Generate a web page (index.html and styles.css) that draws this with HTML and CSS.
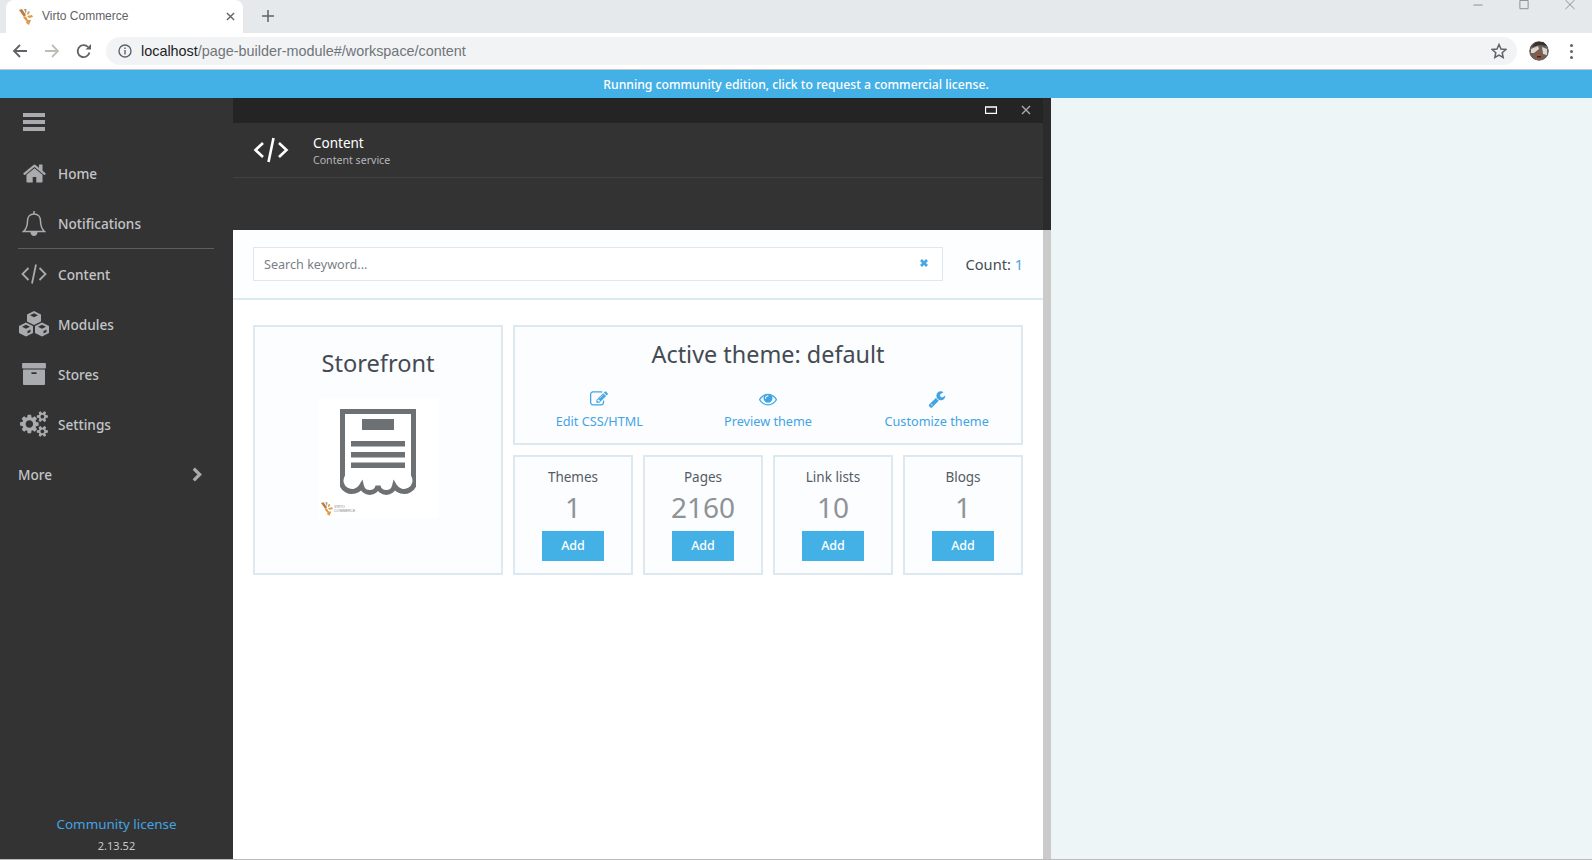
FILE: index.html
```html
<!DOCTYPE html>
<html lang="en">
<head>
<meta charset="utf-8">
<title>Virto Commerce</title>
<link rel="stylesheet" href="styles.css">
</head>
<body>
<div class="tabstrip">
  <div class="tab">
    <svg class="favicon" viewBox="0 0 14 16"><path fill="#c07a3a" d="M0 1l3-1 4 6-2 2z"/><path fill="#9a9a9a" d="M5 0h2.500L7 5z"/><path fill="#e09a4c" d="M9 2l2 1-2 3-1-1zM8 7l5-1 1 2-4 1zM4 8l3-.5L9 11l-2 1zM8 11l4 0-2 5-3-2z"/></svg>
    <span class="tab-title">Virto Commerce</span>
    <svg class="tab-close" viewBox="0 0 10 10"><path d="M1 1l8 8M9 1L1 9"/></svg>
  </div>
  <svg class="new-tab" viewBox="0 0 14 14"><path d="M7 1v12M1 7h12"/></svg>
  <div class="win-controls">
    <svg viewBox="0 0 12 12"><path d="M1 5.500h10"/></svg>
    <svg viewBox="0 0 12 12"><path d="M1.500 .5h9v9h-9z"/></svg>
    <svg viewBox="0 0 12 12"><path d="M1 0l10 10M11 0L1 10"/></svg>
  </div>
</div>
<div class="toolbar">
  <svg class="nav-icon" viewBox="0 0 16 16"><path d="M15 8H2M8 2L2 8l6 6"/></svg>
  <svg class="nav-icon nav-off" viewBox="0 0 16 16"><path d="M1 8h13M8 2l6 6-6 6"/></svg>
  <svg class="nav-icon" viewBox="0 0 16 16"><path d="M13.500 9.500A6 6 0 1 1 12 4"/><path class="fill" d="M9.500 6.500H15V1z"/></svg>
  <div class="omnibox">
    <svg class="info" viewBox="0 0 14 14"><circle cx="7" cy="7" r="6"/><path d="M7 6v4.500M7 3.500v1.500"/></svg>
    <span class="url"><b>localhost</b>/page-builder-module#/workspace/content</span>
    <svg class="star" viewBox="0 0 16 16"><path d="M8 1.500l2 4.500 4.800.5-3.600 3.200 1 4.800L8 12.100l-4.200 2.400 1-4.800L1.200 6.500 6 6z"/></svg>
  </div>
  <svg class="avatar" viewBox="0 0 20 20"><circle cx="10" cy="10" r="10" fill="#6a625c"/><path fill="#3a3230" d="M2 6l5-5 8 0 3 4-7-1z"/><path fill="#dcd8d0" d="M2 8l7-3 1 3-5 4-3 0zM13 6l5 2 0 6-4-1z"/><path fill="#8a5a44" d="M6 12l7-2 1 4-3 5-5-1z"/><path fill="#3a2a26" d="M8 15h4v1.500H8z"/></svg>
  <div class="kebab"><i></i><i></i><i></i></div>
</div>
<a class="banner">Running community edition, click to request a commercial license.</a>
<div class="app">
  <nav class="sidebar">
    <div class="burger"><i></i><i></i><i></i></div>
    <a class="nav-item"><span class="nav-ico"><svg class="ico-home" viewBox="0 0 1792 1792"><path d="M1472 992v480q0 26-19 45t-45 19h-384v-384h-256v384h-384q-26 0-45-19t-19-45v-480q0-1 .5-3t.5-3l575-474 575 474q1 2 1 6zm223-69l-62 74q-8 9-21 11h-3q-13 0-21-7l-692-577-692 577q-12 8-24 7-13-2-21-11l-62-74q-8-10-7-23.500t11-21.500l719-599q32-26 76-26t76 26l244 204v-195q0-14 9-23t23-9h192q14 0 23 9t9 23v408l219 182q10 8 11 21.500t-7 23.500z"/></svg></span>Home</a>
    <a class="nav-item"><span class="nav-ico"><svg class="ico-bell" viewBox="0 0 24 27"><path d="M12 4c-4.200 0-6.500 3.200-6.500 7 0 5.500-1.200 8-4 10.500h21c-2.800-2.500-4-5-4-10.500 0-3.800-2.300-7-6.500-7z"/><path d="M12 1v3"/><path class="fill" d="M8.500 22h7c0 2.400-1.600 4-3.500 4s-3.500-1.600-3.500-4z"/></svg></span>Notifications</a>
    <div class="nav-sep"></div>
    <a class="nav-item"><span class="nav-ico"><svg class="ico-code" viewBox="0 0 26 20"><path d="M7.500 4L1.500 10l6 6M18.500 4l6 6-6 6M15 .5L11 19.500"/></svg></span>Content</a>
    <a class="nav-item"><span class="nav-ico"><svg class="ico-cubes" viewBox="0 0 32 26"><path d="M16 0l7 3.500v7L16 14l-7-3.500v-7zM8 11.500l7 3.500v7L8 25.500 1 22v-7zM24 11.500l7 3.500v7l-7 3.500-7-3.500v-7z"/><path class="fill" d="M16 2.200l4 2-4 2-4-2zM8 13.700l4 2-4 2-4-2zM24 13.700l4 2-4 2-4-2zM25.500 20l3-1.500v2.500l-3 1.500zM9.500 20l3-1.500v2.500l-3 1.500z"/></svg></span>Modules</a>
    <a class="nav-item"><span class="nav-ico"><svg class="ico-store" viewBox="64 128 1664 1536"><path d="M1088 832q0-26-19-45t-45-19h-256q-26 0-45 19t-19 45 19 45 45 19h256q26 0 45-19t19-45zm576-192v960q0 26-19 45t-45 19h-1408q-26 0-45-19t-19-45v-960q0-26 19-45t45-19h1408q26 0 45 19t19 45zm64-448v256q0 26-19 45t-45 19h-1536q-26 0-45-19t-19-45v-256q0-26 19-45t45-19h1536q26 0 45 19t19 45z"/></svg></span>Stores</a>
    <a class="nav-item"><span class="nav-ico"><svg class="ico-cogs" viewBox="0 0 1920 1792"><path d="M896 896q0-106-75-181t-181-75-181 75-75 181 75 181 181 75 181-75 75-181zm768 512q0-52-38-90t-90-38-90 38-38 90q0 53 37.500 90.500t90.500 37.500 90.500-37.500 37.500-90.500zm0-1024q0-52-38-90t-90-38-90 38-38 90q0 53 37.500 90.500t90.500 37.500 90.500-37.500 37.500-90.500zm-384 421v185q0 10-7 19.500t-16 10.500l-155 24q-11 35-32 76 34 48 90 115 7 11 7 20 0 12-7 19-23 30-82.500 89.500t-78.500 59.500q-11 0-21-7l-115-90q-37 19-77 31-11 108-23 155-7 24-30 24h-186q-11 0-20-7.500t-10-17.500l-23-153q-34-10-75-31l-118 89q-7 7-20 7-11 0-21-8-144-133-144-160 0-9 7-19 10-14 41-53t47-61q-23-44-35-82l-152-24q-10-1-17-9.500t-7-19.500v-185q0-10 7-19.500t16-10.500l155-24q11-35 32-76-34-48-90-115-7-11-7-20 0-12 7-20 22-30 82-89t79-59q11 0 21 7l115 90q34-18 77-32 11-108 23-154 7-24 30-24h186q11 0 20 7.500t10 17.500l23 153q34 10 75 31l118-89q8-7 20-7 11 0 21 8 144 133 144 160 0 8-7 19-12 16-42 54t-45 60q23 48 34 82l152 23q10 2 17 10.500t7 19.500zm640 533v140q0 16-149 31-12 27-30 52 51 113 51 138 0 4-4 7-122 71-124 71-8 0-46-47t-52-68q-20 2-30 2t-30-2q-14 21-52 68t-46 47q-2 0-124-71-4-3-4-7 0-25 51-138-18-25-30-52-149-15-149-31v-140q0-16 149-31 13-29 30-52-51-113-51-138 0-4 4-7 4-2 35-20t59-34 30-16q8 0 46 46.500t52 67.500q20-2 30-2t30 2q51-71 92-112l6-2q4 0 124 70 4 3 4 7 0 25-51 138 17 23 30 52 149 15 149 31zm0-1024v140q0 16-149 31-12 27-30 52 51 113 51 138 0 4-4 7-122 71-124 71-8 0-46-47t-52-68q-20 2-30 2t-30-2q-14 21-52 68t-46 47q-2 0-124-71-4-3-4-7 0-25 51-138-18-25-30-52-149-15-149-31v-140q0-16 149-31 13-29 30-52-51-113-51-138 0-4 4-7 4-2 35-20t59-34 30-16q8 0 46 46.500t52 67.500q20-2 30-2t30 2q51-71 92-112l6-2q4 0 124 70 4 3 4 7 0 25-51 138 17 23 30 52 149 15 149 31z"/></svg></span>Settings</a>
    <a class="nav-item nav-more">More<svg class="chev" viewBox="0 0 10 14"><path d="M2 1.500L7.500 7 2 12.500"/></svg></a>
    <div class="side-foot">
      <a class="license">Community license</a>
      <span class="version">2.13.52</span>
    </div>
  </nav>
  <section class="blade">
    <div class="blade-bar">
      <svg class="bar-max" viewBox="0 0 12 8"><path d="M.5 1h11v6.500H.5z"/></svg>
      <svg class="bar-close" viewBox="0 0 10 10"><path d="M1 1l8 8M9 1L1 9"/></svg>
    </div>
    <header class="blade-head">
      <svg class="head-ico" viewBox="0 0 36 26"><path d="M10 6L2.500 13l7.500 7M26 6l7.500 7-7.500 7M20.500 1L15.500 25"/></svg>
      <div class="head-text">
        <div class="head-title">Content</div>
        <div class="head-sub">Content service</div>
      </div>
    </header>
    <div class="blade-tools"></div>
    <div class="blade-body">
      <div class="blade-content">
        <div class="searchrow">
          <div class="search">
            <span class="placeholder">Search keyword...</span>
            <svg class="search-x" viewBox="0 0 10 10"><path d="M2 2l6 6M8 2L2 8"/></svg>
          </div>
          <div class="count">Count: <span class="count-n">1</span></div>
        </div>
        <div class="cards">
          <div class="card store-card">
            <h2 class="store-title">Storefront</h2>
            <div class="store-img">
              <svg class="receipt" viewBox="0 0 76 86"><path class="r-line" d="M2.500 2.500H73.500V66A10.500 10.500 0 0 1 54.500 77A8.500 8.500 0 0 1 38 77A8.500 8.500 0 0 1 21.500 77A10.500 10.500 0 0 1 2.500 66Z"/><path class="r-fill" d="M22 10h32v11H22zM11 32h54v5.500H11zM11 43h54v5.500H11zM11 53.500h54V59H11z"/></svg>
              <div class="mini-logo">
                <svg viewBox="0 0 14 16"><path fill="#c07a3a" d="M0 1l3-1 4 6-2 2z"/><path fill="#9a9a9a" d="M5 0h2.500L7 5z"/><path fill="#e09a4c" d="M9 2l2 1-2 3-1-1zM8 7l5-1 1 2-4 1zM4 8l3-.5L9 11l-2 1zM8 11l4 0-2 5-3-2z"/></svg>
                <span>VIRTO<br>COMMERCE</span>
              </div>
            </div>
          </div>
          <div class="card-col">
            <div class="card theme-card">
              <h2 class="theme-title">Active theme: default</h2>
              <div class="theme-links">
                <a class="theme-link"><svg viewBox="0 0 1792 1792"><path d="M888 1184l116-116-152-152-116 116v56h96v96h56zm440-720q-16-16-33 1l-350 350q-17 17-1 33t33-1l350-350q17-17 1-33zm80 594v190q0 119-84.500 203.500t-203.500 84.500h-832q-119 0-203.500-84.500t-84.500-203.500v-832q0-119 84.500-203.500t203.500-84.500h832q63 0 117 25 15 7 18 23 3 17-9 29l-49 49q-14 14-32 8-23-6-45-6h-832q-66 0-113 47t-47 113v832q0 66 47 113t113 47h832q66 0 113-47t47-113v-126q0-13 9-22l64-64q15-15 35-7t20 29zm-96-738l288 288-672 672h-288v-288zm444 132l-92 92-288-288 92-92q28-28 68-28t68 28l152 152q28 28 28 68t-28 68z"/></svg>Edit CSS/HTML</a>
                <a class="theme-link"><svg viewBox="0 0 1792 1792"><path d="M1664 960q-152-236-381-353 61 104 61 225 0 185-131.500 316.500t-316.500 131.500-316.500-131.500-131.500-316.500q0-121 61-225-229 117-381 353 133 205 333.500 326.500t434.500 121.500 434.500-121.500 333.500-326.500zm-720-384q0-20-14-34t-34-14q-125 0-214.500 89.500t-89.500 214.500q0 20 14 34t34 14 34-14 14-34q0-86 61-147t147-61q20 0 34-14t14-34zm848 384q0 34-20 69-140 230-376.500 368.500t-499.500 138.500-499.500-139-376.500-368q-20-35-20-69t20-69q140-229 376.500-368t499.500-139 499.500 139 376.500 368q20 35 20 69z"/></svg>Preview theme</a>
                <a class="theme-link"><svg viewBox="0 0 1792 1792"><path d="M448 1472q0-26-19-45t-45-19-45 19-19 45 19 45 45 19 45-19 19-45zm644-420l-682 682q-37 37-90 37-52 0-91-37l-106-108q-38-36-38-90 0-53 38-91l681-681q39 98 114.500 173.500t173.500 114.500zm634-435q0 39-23 106-47 134-164.500 217.500t-258.500 83.500q-185 0-316.500-131.500t-131.500-316.500 131.500-316.500 316.500-131.500q58 0 121.500 16.500t107.500 46.500q16 11 16 28t-16 28l-293 169v224l193 107q5-3 79-48.500t135.500-81 70.500-35.500q15 0 23.500 10t8.500 25z"/></svg>Customize theme</a>
              </div>
            </div>
            <div class="stats">
              <div class="card stat"><div class="stat-label">Themes</div><div class="stat-num">1</div><a class="add">Add</a></div>
              <div class="card stat"><div class="stat-label">Pages</div><div class="stat-num">2160</div><a class="add">Add</a></div>
              <div class="card stat"><div class="stat-label">Link lists</div><div class="stat-num">10</div><a class="add">Add</a></div>
              <div class="card stat"><div class="stat-label">Blogs</div><div class="stat-num">1</div><a class="add">Add</a></div>
            </div>
          </div>
        </div>
      </div>
      <div class="scrolltrack"></div>
    </div>
  </section>
</div>
</body>
</html>
```
FILE: styles.css
```css
* { box-sizing: border-box; }
html, body { margin: 0; height: 100%; }
body {
  width: 1592px; height: 860px; overflow: hidden;
  display: flex; flex-direction: column;
  font-family: "Noto Sans", "Open Sans", sans-serif;
  background: #edf5f7;
}
svg { display: block; flex: none; }
a { color: inherit; text-decoration: none; }

/* browser chrome */
.tabstrip { height: 33px; flex: none; background: #e6e9ec; display: flex; align-items: flex-start; position: relative; padding-left: 6px; }
.tab { width: 237px; height: 33px; background: #fff; border-radius: 8px 8px 0 0; display: flex; align-items: center; padding: 0 8px 0 13px; }
.favicon { width: 14px; height: 16px; }
.tab-title { margin-left: 9px; padding-bottom: 1px; font: 12px "Liberation Sans", Arial, sans-serif; color: #5f6368; flex: 1; }
.tab-close { width: 9px; height: 9px; fill: none; stroke: #5f6368; stroke-width: 1.500; }
.new-tab { width: 14px; height: 14px; margin: 9px 0 0 18px; fill: none; stroke: #5f6368; stroke-width: 1.500; }
.win-controls { margin-left: auto; display: flex; gap: 34px; padding-right: 16px; }
.win-controls svg { width: 12px; height: 11px; fill: none; stroke: #85888c; stroke-width: 1; }

.toolbar { height: 37px; flex: none; background: #fff; border-bottom: 1px solid #c4c5c6; display: flex; align-items: center; padding: 0 10px 0 12px; }
.nav-icon { width: 16px; height: 16px; margin-right: 16px; fill: none; stroke: #5f6368; stroke-width: 1.800; }
.nav-icon .fill { fill: #5f6368; stroke: none; }
.nav-off { stroke: #bdbdb8; }
.omnibox { width: 1411px; margin-left: -2px; height: 28px; background: #f1f3f4; border-radius: 14px; display: flex; align-items: center; padding: 0 10px 0 12px; }
.info { width: 14px; height: 14px; fill: none; stroke: #5f6368; stroke-width: 1.400; }
.url { margin-left: 9px; font: 14.400px "Liberation Sans", Arial, sans-serif; color: #70757a; flex: 1; }
.url b { font-weight: normal; color: #202124; }
.star { width: 16px; height: 16px; fill: none; stroke: #5f6368; stroke-width: 1.500; }
.avatar { width: 20px; height: 20px; margin-left: 12px; border-radius: 50%; }
.kebab { margin-left: 21px; display: flex; flex-direction: column; gap: 3px; }
.kebab i { width: 3px; height: 3px; border-radius: 50%; background: #5f6368; }

.banner { height: 28px; flex: none; background: #43b0e6; color: #fff; font-size: 12.200px; font-weight: 500; line-height: 30px; text-align: center; }

/* app */
.app { flex: 1; display: flex; min-height: 0; border-bottom: 1px solid #bbb; }
.sidebar { width: 233px; background: #333; color: #c3c5c8; display: flex; flex-direction: column; padding-top: 15px; }
.burger { margin: 0 0 17px 23px; width: 22px; height: 18px; display: flex; flex-direction: column; justify-content: space-between; }
.burger i { height: 4px; background: #a9abae; }
.nav-item { height: 50px; display: flex; align-items: center; font-size: 13.600px; font-weight: 500; flex: none; }
.nav-ico { width: 68px; margin-right: -10px; display: flex; justify-content: center; }
.nav-ico svg { fill: #a9abae; }
.nav-ico .fill { fill: #333; }
.ico-home { width: 25px; height: 25px; }
.ico-bell { width: 24px; height: 27px; fill: none !important; stroke: #a9abae; stroke-width: 1.500; }
.ico-bell .fill { fill: #a9abae; stroke: none; }
.ico-code { width: 26px; height: 20px; fill: none !important; stroke: #a9abae; stroke-width: 1.800; }
.ico-cubes { width: 32px; height: 26px; }
.ico-store { width: 24px; height: 22px; }
.ico-cogs { width: 28px; height: 26px; }
.nav-sep { height: 1px; margin: 0 19px 0 18px; background: #5c5e63; flex: none; }
.nav-more { padding: 0 30px 0 18px; justify-content: space-between; }
.chev { width: 12px; height: 15px; fill: none; stroke: #a9abae; stroke-width: 3; }
.side-foot { margin-top: auto; padding-bottom: 5px; display: flex; flex-direction: column; align-items: center; gap: 5px; }
.license { color: #43a4e4; font-size: 13.400px; line-height: 18px; }
.version { color: #c9cacc; font-size: 11px; line-height: 16px; }

/* blade */
.blade { width: 818px; display: flex; flex-direction: column; background: #2b2b2b; }
.blade-bar { height: 25px; flex: none; background: #242424; display: flex; align-items: center; justify-content: flex-end; gap: 24px; padding: 0 12px 2px 0; width: 810px; }
.bar-max { width: 12px; height: 8px; fill: none; stroke: #fff; stroke-width: 1.300; }
.bar-close { width: 10px; height: 10px; fill: none; stroke: #a9abae; stroke-width: 1.400; }
.blade-head { height: 55px; flex: none; width: 810px; background: #333; border-bottom: 1px solid #414141; display: flex; align-items: center; padding-left: 20px; }
.head-ico { width: 36px; height: 26px; fill: none; stroke: #fff; stroke-width: 2.600; }
.head-text { margin-left: 24px; }
.head-title { color: #fff; font-size: 13.500px; line-height: 20px; }
.head-sub { color: #b5b7bb; font-size: 10.600px; line-height: 14px; }
.blade-tools { height: 52px; width: 810px; flex: none; background: #333; }
.blade-body { flex: 1; display: flex; min-height: 0; }
.blade-content { width: 810px; background: #fff; display: flex; flex-direction: column; }
.scrolltrack { width: 8px; background: #cbcbcb; }

.searchrow { height: 70px; background: #fdfeff; border-bottom: 2px solid #dde9f1; display: flex; align-items: flex-start; padding: 17px 20px 0 20px; flex: none; }
.search { width: 690px; height: 34px; background: #fff; border: 1px solid #dde9f1; display: flex; align-items: center; justify-content: space-between; padding: 0 13px 0 10px; }
.placeholder { color: #7a7f85; font-size: 12.600px; }
.search-x { width: 10px; height: 10px; margin-bottom: 2px; fill: none; stroke: #43a8e4; stroke-width: 2.800; }
.count { margin-left: auto; color: #444b52; font-size: 14.600px; line-height: 34px; }
.count-n { color: #43a4e4; }

.cards { display: flex; gap: 10px; padding: 25px 20px 0; }
.card { background: #fbfdff; border: 2px solid #dde9f1; }
.store-card { width: 250px; height: 250px; display: flex; flex-direction: column; align-items: center; }
.store-title { margin: 20px 0 0; font-size: 23.600px; line-height: 32px; font-weight: 400; color: #444b52; }
.store-img { width: 120px; height: 120px; margin-top: 19px; background: #fff; display: flex; flex-direction: column; align-items: center; padding-top: 11px; position: relative; }
.receipt { width: 76px; height: 86px; }
.r-line { fill: none; stroke: #6e7174; stroke-width: 5; }
.r-fill { fill: #6e7174; }
.mini-logo { position: absolute; left: 3px; bottom: 2px; display: flex; align-items: center; gap: 1px; font: 3.600px/4px "Liberation Sans", Arial, sans-serif; color: #888; }
.mini-logo svg { width: 12px; height: 14px; }
.card-col { width: 510px; display: flex; flex-direction: column; gap: 10px; }
.theme-card { height: 120px; display: flex; flex-direction: column; align-items: center; }
.theme-title { margin: 11px 0 0; font-size: 23.400px; line-height: 32px; font-weight: 400; color: #444b52; }
.theme-links { width: 100%; display: flex; margin-top: 20px; }
.theme-link { flex: 1; display: flex; flex-direction: column; align-items: center; color: #43a4e4; font-size: 12.700px; gap: 4px; line-height: 18px; }
.theme-link svg { width: 18px; height: 18px; fill: #43a4e4; }
.stats { display: flex; gap: 10px; }
.stat { width: 120px; height: 120px; display: flex; flex-direction: column; align-items: center; padding-top: 10px; }
.stat-label { color: #555b62; font-size: 13.500px; line-height: 21px; }
.stat-num { color: #8f9296; font-size: 28px; line-height: 39px; }
.add { width: 62px; height: 30px; margin-top: 4px; background: #43b0e6; color: #fff; font-size: 12.500px; font-weight: 500; line-height: 30px; text-align: center; }
```
